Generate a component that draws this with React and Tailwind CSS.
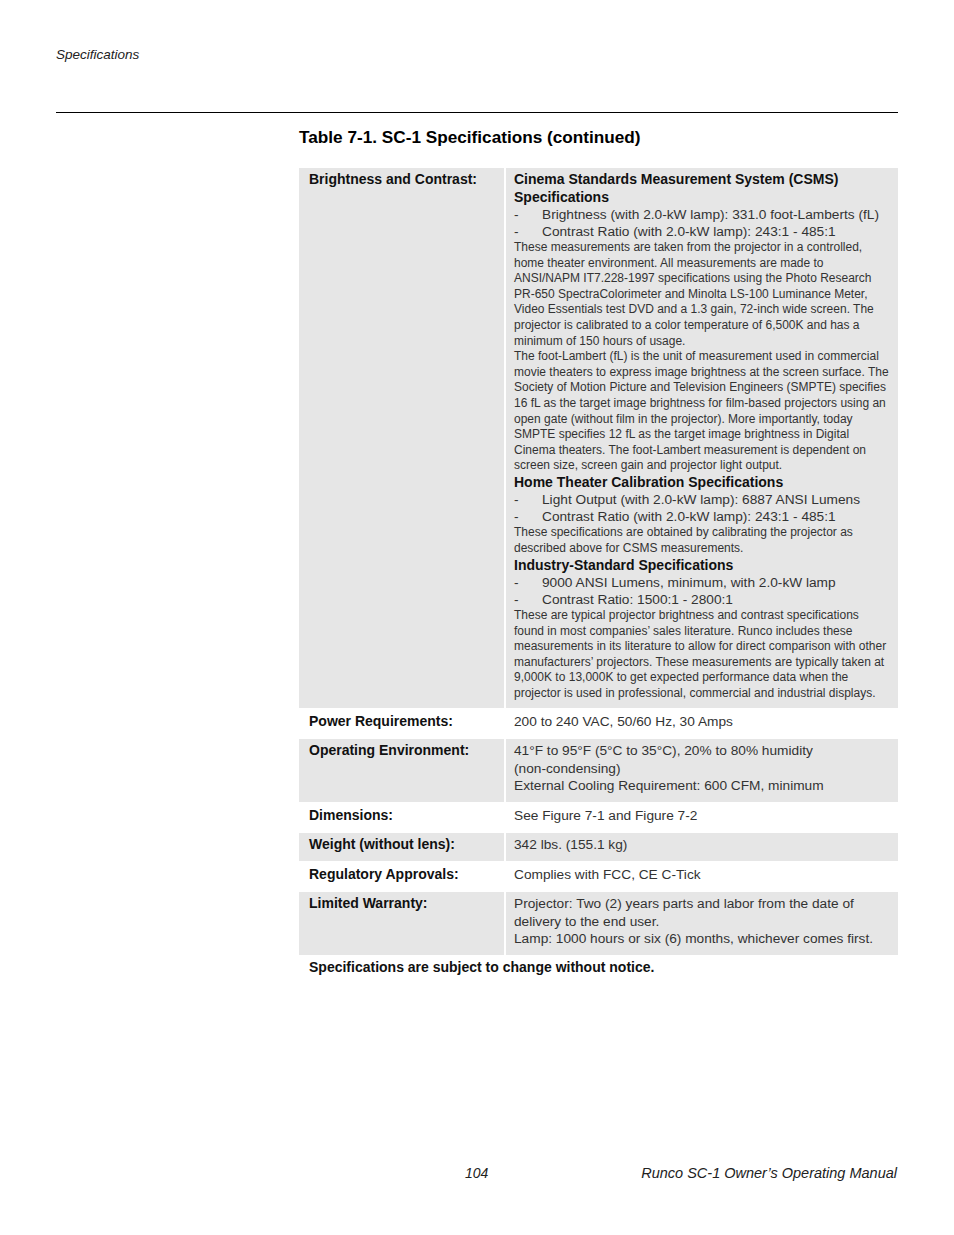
const csmsNotes = [
  "These measurements are taken from the projector in a controlled,",
  "home theater environment. All measurements are made to",
  "ANSI/NAPM IT7.228-1997 specifications using the Photo Research",
  "PR-650 SpectraColorimeter and Minolta LS-100 Luminance Meter,",
  "Video Essentials test DVD and a 1.3 gain, 72-inch wide screen. The",
  "projector is calibrated to a color temperature of 6,500K and has a",
  "minimum of 150 hours of usage.",
  "The foot-Lambert (fL) is the unit of measurement used in commercial",
  "movie theaters to express image brightness at the screen surface. The",
  "Society of Motion Picture and Television Engineers (SMPTE) specifies",
  "16 fL as the target image brightness for film-based projectors using an",
  "open gate (without film in the projector). More importantly, today",
  "SMPTE specifies 12 fL as the target image brightness in Digital",
  "Cinema theaters. The foot-Lambert measurement is dependent on",
  "screen size, screen gain and projector light output.",
];

const homeNotes = [
  "These specifications are obtained by calibrating the projector as",
  "described above for CSMS measurements.",
];

const industryNotes = [
  "These are typical projector brightness and contrast specifications",
  "found in most companies\u2019 sales literature. Runco includes these",
  "measurements in its literature to allow for direct comparison with other",
  "manufacturers\u2019 projectors. These measurements are typically taken at",
  "9,000K to 13,000K to get expected performance data when the",
  "projector is used in professional, commercial and industrial displays.",
];

const rows = [
  { label: "Power Requirements:", lines: ["200 to 240 VAC, 50/60 Hz, 30 Amps"] },
  {
    label: "Operating Environment:",
    lines: [
      "41\u00b0F to 95\u00b0F (5\u00b0C to 35\u00b0C), 20% to 80% humidity",
      "(non-condensing)",
      "External Cooling Requirement: 600 CFM, minimum",
    ],
  },
  { label: "Dimensions:", lines: ["See Figure 7-1 and Figure 7-2"] },
  { label: "Weight (without lens):", lines: ["342 lbs. (155.1 kg)"] },
  { label: "Regulatory Approvals:", lines: ["Complies with FCC, CE C-Tick"] },
  {
    label: "Limited Warranty:",
    lines: [
      "Projector: Two (2) years parts and labor from the date of",
      "delivery to the end user.",
      "Lamp: 1000 hours or six (6) months, whichever comes first.",
    ],
  },
];

const Heading = ({ children }) => (
  <div className="font-bold text-[14px] leading-[17.5px] text-[#111] whitespace-nowrap">
    {children}
  </div>
);

const Bullet = ({ children }) => (
  <div className="flex text-[13.7px] leading-[17px] whitespace-nowrap">
    <span className="w-[28px] shrink-0">-</span>
    <span>{children}</span>
  </div>
);

const Notes = ({ lines }) => (
  <div className="text-[12px] leading-[15.6px]">
    {lines.map((l) => (
      <div key={l} className="whitespace-nowrap">
        {l}
      </div>
    ))}
  </div>
);

const Row = ({ label, gray, first, children }) => (
  <div className="flex gap-[2px]">
    <div
      className={`w-[205px] shrink-0 pl-[10px] pt-[3px] font-bold text-[14px] leading-[17.5px] text-[#111] ${
        first ? "pb-[6px]" : "pb-[7px]"
      } ${gray ? "bg-[#e6e6e6]" : ""}`}
    >
      {label}
    </div>
    <div
      className={`flex-1 pl-[8px] pt-[3px] text-[#333] ${first ? "pb-[6px]" : "pb-[7px]"} ${
        gray ? "bg-[#e6e6e6]" : ""
      }`}
    >
      {children}
    </div>
  </div>
);

export default function App() {
  return (
    <div
      className="w-[954px] h-[1235px] bg-white flex flex-col text-black"
      style={{ fontFamily: '"Liberation Sans", Arial, sans-serif' }}
    >
      <div className="pt-[46px] px-[56px] italic text-[13.5px] leading-[18px] text-[#222]">
        Specifications
      </div>
      <div className="mt-[48px] mx-[56px] h-px bg-black" />
      <div className="mt-[14px] ml-[299px] font-bold text-[17.2px] leading-[20px]">
        Table 7-1. SC-1 Specifications (continued)
      </div>

      <div className="mt-[21px] ml-[299px] w-[599px] flex flex-col gap-[2px]">
        <Row label="Brightness and Contrast:" gray first>
          <Heading>Cinema Standards Measurement System (CSMS)</Heading>
          <Heading>Specifications</Heading>
          <Bullet>Brightness (with 2.0-kW lamp): 331.0 foot-Lamberts (fL)</Bullet>
          <Bullet>Contrast Ratio (with 2.0-kW lamp): 243:1 - 485:1</Bullet>
          <Notes lines={csmsNotes} />
          <Heading>Home Theater Calibration Specifications</Heading>
          <Bullet>Light Output (with 2.0-kW lamp): 6887 ANSI Lumens</Bullet>
          <Bullet>Contrast Ratio (with 2.0-kW lamp): 243:1 - 485:1</Bullet>
          <Notes lines={homeNotes} />
          <Heading>Industry-Standard Specifications</Heading>
          <Bullet>9000 ANSI Lumens, minimum, with 2.0-kW lamp</Bullet>
          <Bullet>Contrast Ratio: 1500:1 - 2800:1</Bullet>
          <Notes lines={industryNotes} />
        </Row>
        {rows.map((r, i) => (
          <Row key={r.label} label={r.label} gray={i % 2 === 1}>
            {r.lines.map((l) => (
              <div key={l} className="text-[13.7px] leading-[17.5px] whitespace-nowrap">
                {l}
              </div>
            ))}
          </Row>
        ))}
      </div>

      <div className="mt-[3px] ml-[309px] font-bold text-[14px] leading-[18px] text-[#111]">
        Specifications are subject to change without notice.
      </div>

      <div className="mt-auto pb-[53px] pl-[465px] pr-[57px] flex items-baseline italic leading-[18px] text-[#222]">
        <span className="text-[14px]">104</span>
        <span className="ml-auto text-[14.5px]">Runco SC-1 Owner’s Operating Manual</span>
      </div>
    </div>
  );
}
